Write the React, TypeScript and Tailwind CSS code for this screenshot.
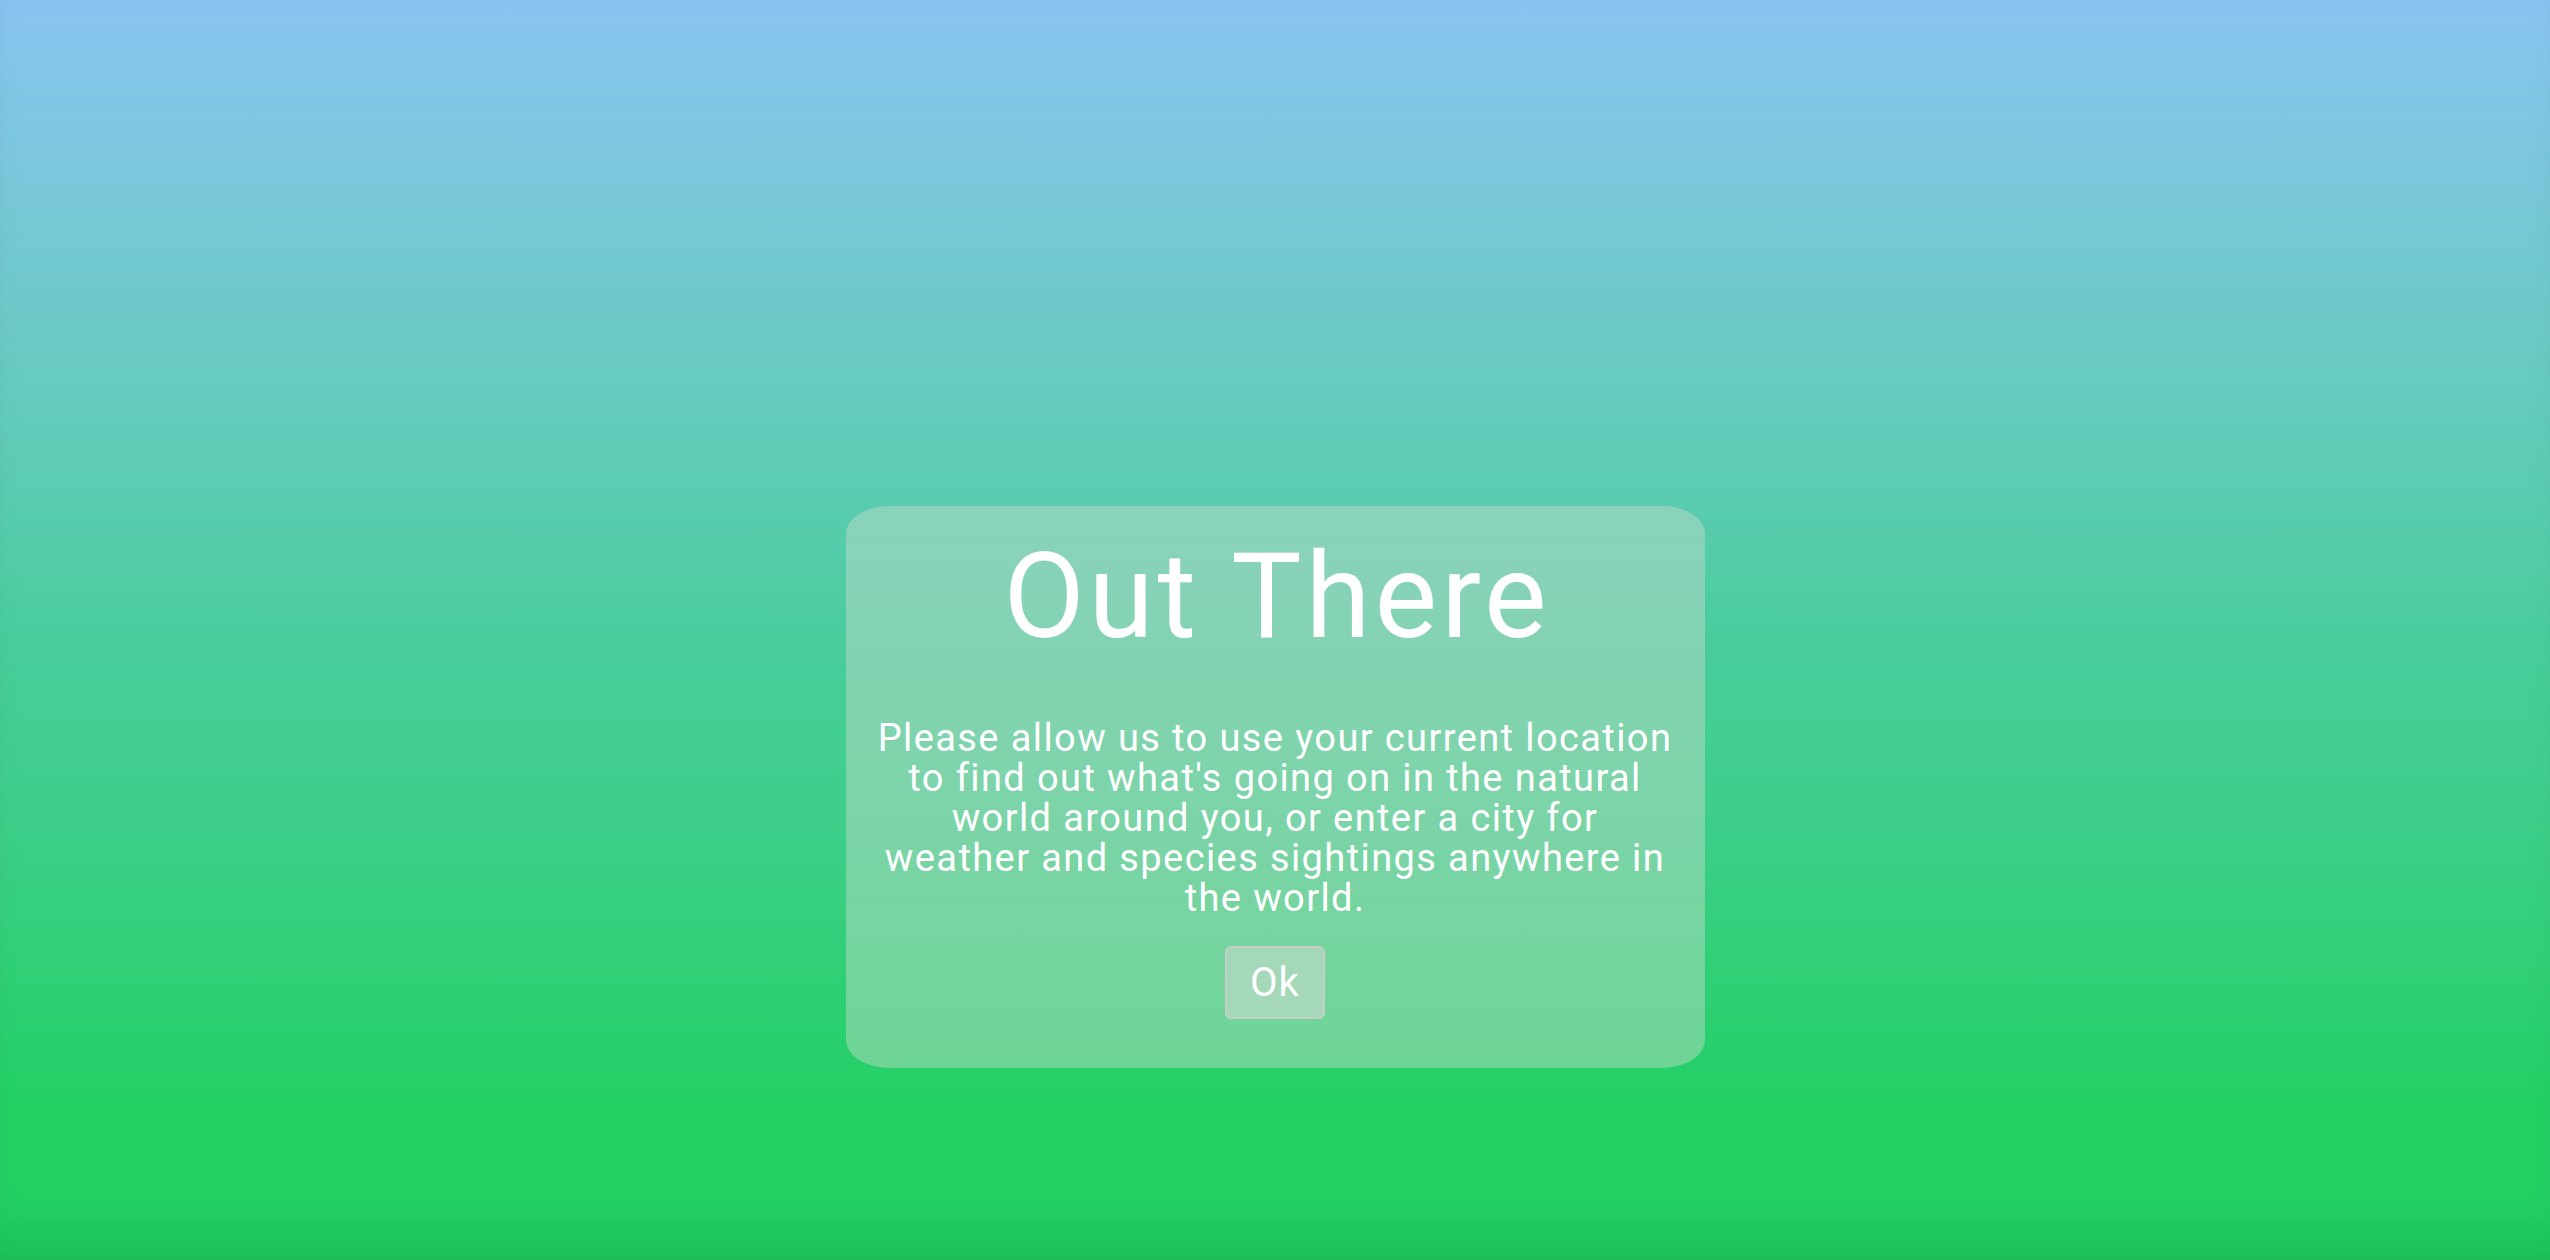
const lines = [
  "Please allow us to use your current location",
  "to find out what's going on in the natural",
  "world around you, or enter a city for",
  "weather and species sightings anywhere in",
  "the world.",
]

const App = () => {
  return (
    <div
      className="flex h-[1260px] w-full justify-center bg-gradient-to-b from-[#89c4f1] via-[#4acd9e] via-50% to-[#22d064] to-[88%] pt-[506px] shadow-[inset_0_-50px_50px_-30px_rgba(0,60,20,0.15)]"
      style={{ fontFamily: "Roboto, 'Liberation Sans', sans-serif" }}
    >
      <div className="flex h-[562px] w-[859px] flex-col items-center rounded-[5%] bg-gradient-to-b from-[#8ad2bc] to-[#6ed596] px-[30px] pt-[32px] text-white">
        <h1 className="pl-[4px] text-[118px] leading-none font-normal tracking-[4px]">Out There</h1>
        <p className="mt-[62px] text-center text-[38px] leading-10 tracking-[1.4px]">
          {lines.map((l, i) => (
            <span key={i} className="block whitespace-nowrap">
              {l}
            </span>
          ))}
        </p>
        <button className="mt-[28px] flex h-[73px] w-[100px] items-center justify-center rounded-[6px] border-2 border-[#c8cdc9] bg-[#a5d7b9] text-[40px] leading-none tracking-[1px] text-white">
          Ok
        </button>
      </div>
    </div>
  )
}

export default App
